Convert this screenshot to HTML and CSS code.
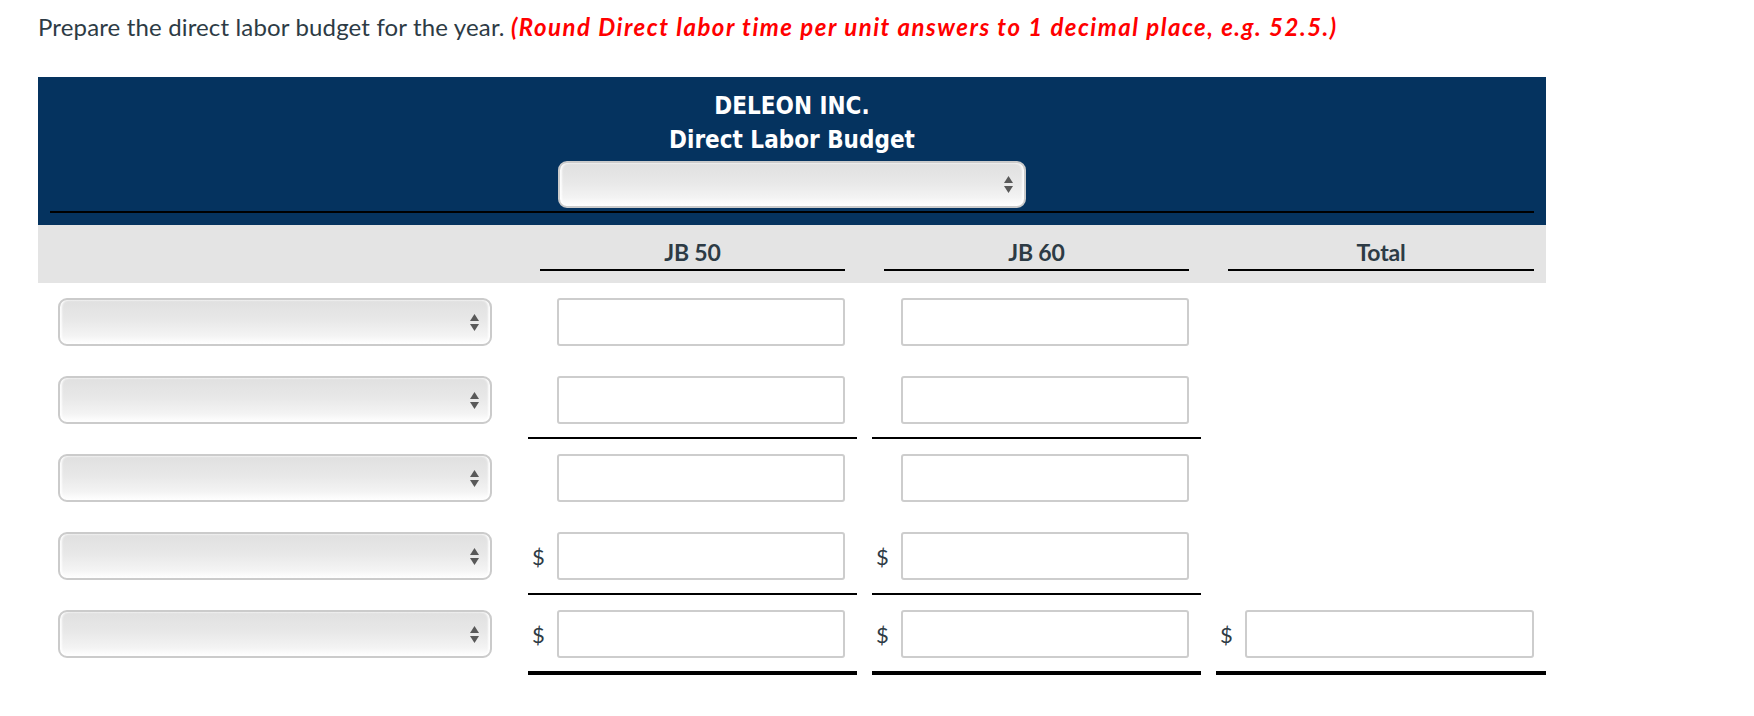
FILE: index.html
```html
<!DOCTYPE html>
<html lang="en">
<head>
  <meta charset="UTF-8">
  <title>Direct Labor Budget</title>
  <link rel="stylesheet" href="styles.css">
</head>
<body>

  <p class="prompt">Prepare the direct labor budget for the year. <em class="hint">(Round Direct labor time per unit answers to 1 decimal place, e.g. 52.5.)</em></p>

  <div class="budget">
    <div class="budget-head">
      <div class="title">DELEON INC.</div>
      <div class="title">Direct Labor Budget</div>
      <div class="pick pick-head">
        <svg class="arrows" width="9" height="17" viewBox="0 0 9 17"><polygon points="4.5,0 9,7 0,7"/><polygon points="0,10 9,10 4.5,17"/></svg>
      </div>
      <div class="head-rule"></div>
    </div>

    <div class="cols">
      <div></div>
      <div class="col-name">JB 50</div>
      <div class="col-name">JB 60</div>
      <div class="col-name">Total</div>
    </div>

    <!-- row 1 -->
    <div class="row">
      <div class="label"><div class="pick"><svg class="arrows" width="9" height="17" viewBox="0 0 9 17"><polygon points="4.5,0 9,7 0,7"/><polygon points="0,10 9,10 4.5,17"/></svg></div></div>
      <div class="cell"><span class="cur"></span><input class="amt" type="text"></div>
      <div class="cell"><span class="cur"></span><input class="amt" type="text"></div>
      <div class="cell"></div>
    </div>

    <!-- row 2 -->
    <div class="row">
      <div class="label"><div class="pick"><svg class="arrows" width="9" height="17" viewBox="0 0 9 17"><polygon points="4.5,0 9,7 0,7"/><polygon points="0,10 9,10 4.5,17"/></svg></div></div>
      <div class="cell sum"><span class="cur"></span><input class="amt" type="text"></div>
      <div class="cell sum"><span class="cur"></span><input class="amt" type="text"></div>
      <div class="cell"></div>
    </div>

    <!-- row 3 -->
    <div class="row">
      <div class="label"><div class="pick"><svg class="arrows" width="9" height="17" viewBox="0 0 9 17"><polygon points="4.5,0 9,7 0,7"/><polygon points="0,10 9,10 4.5,17"/></svg></div></div>
      <div class="cell"><span class="cur"></span><input class="amt" type="text"></div>
      <div class="cell"><span class="cur"></span><input class="amt" type="text"></div>
      <div class="cell"></div>
    </div>

    <!-- row 4 -->
    <div class="row">
      <div class="label"><div class="pick"><svg class="arrows" width="9" height="17" viewBox="0 0 9 17"><polygon points="4.5,0 9,7 0,7"/><polygon points="0,10 9,10 4.5,17"/></svg></div></div>
      <div class="cell sum"><span class="cur">$</span><input class="amt" type="text"></div>
      <div class="cell sum"><span class="cur">$</span><input class="amt" type="text"></div>
      <div class="cell"></div>
    </div>

    <!-- row 5 -->
    <div class="row">
      <div class="label"><div class="pick"><svg class="arrows" width="9" height="17" viewBox="0 0 9 17"><polygon points="4.5,0 9,7 0,7"/><polygon points="0,10 9,10 4.5,17"/></svg></div></div>
      <div class="cell grand"><span class="cur">$</span><input class="amt" type="text"></div>
      <div class="cell grand"><span class="cur">$</span><input class="amt" type="text"></div>
      <div class="cell grand"><span class="cur">$</span><input class="amt" type="text"></div>
    </div>
  </div>

</body>
</html>
```

FILE: styles.css
```css
body {
  margin: 0;
  font-family: 'Lato', 'Liberation Sans', sans-serif;
  color: #2d3b45;
  background: #fff;
}

.prompt {
  margin: 0;
  padding: 12px 0 0 38px;
  font-size: 24px;
  line-height: 30px;
  letter-spacing: 0.15px;
}

.hint {
  color: #ff0000;
  font-weight: bold;
  letter-spacing: 1.5px;
}

.budget {
  width: 1508px;
  margin: 35px 0 0 38px;
}

.budget-head {
  background-color: #05335f;
  padding: 12px 12px 12px;
  text-align: center;
}

.title {
  color: #fff;
  font-family: 'DejaVu Sans Condensed', 'DejaVu Sans', sans-serif;
  font-weight: bold;
  font-size: 24px;
  line-height: 34px;
}

.head-rule {
  border-top: 2px solid #000;
}

.pick {
  box-sizing: border-box;
  width: 434px;
  height: 48px;
  border: 2px solid #cbcbcb;
  border-radius: 9px;
  background: linear-gradient(to bottom, #e0e0e0 0%, #e8e8e8 45%, #f3f3f3 80%, #ffffff 100%);
  box-shadow: inset 2px 0 2px rgba(255, 255, 255, 0.9), inset -2px 0 2px rgba(255, 255, 255, 0.9);
  display: flex;
  align-items: center;
  justify-content: flex-end;
  padding-right: 11px;
}

.pick-head {
  width: 468px;
  height: 47px;
  margin: 4px auto 3px;
}

.arrows {
  fill: #595959;
}

.cols, .row {
  display: grid;
  grid-template-columns: 475px 329px 329px 330px;
  column-gap: 15px;
}

.cols {
  background-color: #e4e4e4;
}

.col-name {
  margin: 15px 12px 12px;
  padding-bottom: 5px;
  border-bottom: 2px solid #000;
  text-align: center;
  font-weight: bold;
  font-size: 23px;
  line-height: 24px;
  letter-spacing: -0.2px;
}

.label {
  padding: 15px 0 13px 20px;
  border-bottom: 2px solid transparent;
}

.cell {
  display: flex;
  align-items: center;
  padding: 15px 12px 13px 4px;
  border-bottom: 2px solid transparent;
}

.cell.sum {
  border-bottom-color: #000;
}

.cell.grand {
  border-bottom: 4px solid #000;
}

.cur {
  flex: 0 0 25px;
  font-size: 22px;
}

.amt {
  flex: 1;
  min-width: 0;
  box-sizing: border-box;
  height: 48px;
  margin: 0;
  padding: 0 8px;
  border: 2px solid #cdcdcd;
  border-radius: 3px;
  background: #fff;
  font-family: inherit;
  font-size: 18px;
}
```
